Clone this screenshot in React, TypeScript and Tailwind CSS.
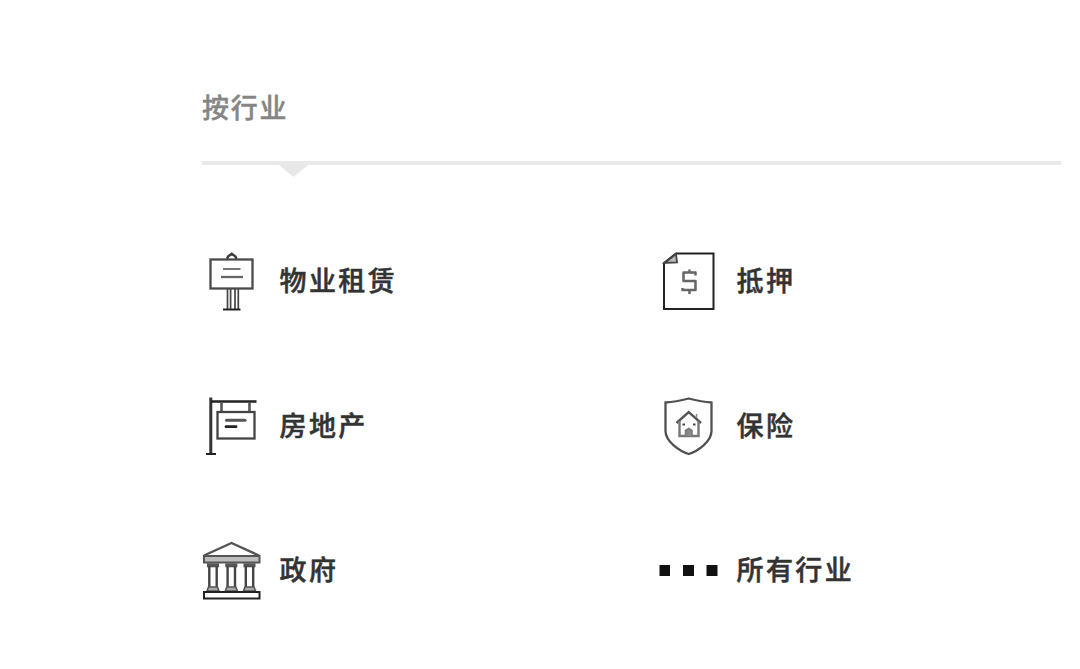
import type { ReactNode } from 'react';

interface Industry {
  label: string;
  icon: ReactNode;
}

const svgProps = {
  width: 60,
  height: 60,
  viewBox: '0 0 60 60',
  fill: 'none',
  stroke: '#3a3a3a',
  strokeWidth: 2,
};

const RentIcon = () => (
  <svg {...svgProps}>
    <path d="M25 7 26 4.5 29.7 1.8 33.5 4.5 34.5 7" strokeWidth="2.4" />
    <rect x="8.5" y="7.5" width="42" height="29" stroke="#4a4a4a" strokeWidth="2.3" />
    <path d="M21 17H38.5" stroke="#777" />
    <path d="M19 25H41" stroke="#666" strokeWidth="2.3" />
    <path d="M25.5 37V57M28.6 37V57M33 37V57M36.3 37V57" stroke="#444" strokeWidth="1.7" />
    <path d="M21 57.5H38.5" stroke="#222" />
  </svg>
);

const MortgageIcon = () => (
  <svg {...svgProps}>
    <path d="M17 1.5H54.5V57H5V11Z" stroke="#222" />
    <path d="M17 2 18 10.5 5.5 11Z" fill="#bbb" stroke="#444" strokeWidth="1.8" />
    <path
      d="M36.5 23.5V20.5H24.5V29H36.5V38H23.5V36M30.5 17.5V21M30.5 38V42"
      stroke="#666"
      strokeWidth="2.5"
      strokeLinejoin="round"
    />
  </svg>
);

const RealEstateIcon = () => (
  <svg {...svgProps}>
    <path d="M8.8 0.5V57" stroke="#333" strokeWidth="3" />
    <path d="M4 57H14" stroke="#222" />
    <path d="M9 4.5H54.5" stroke="#222" strokeWidth="2.6" />
    <path d="M19.5 5V14M47.5 5V14" stroke="#555" strokeWidth="2.6" />
    <rect x="15.5" y="15" width="37" height="26.5" stroke="#444" strokeWidth="2.3" />
    <path d="M24.5 23.2H43" stroke="#555" strokeWidth="3" strokeLinecap="round" />
    <path d="M24 29.7H34" stroke="#222" strokeWidth="2.8" strokeLinecap="round" />
  </svg>
);

const InsuranceIcon = () => (
  <svg {...svgProps}>
    <path
      d="M6.5 5.5C15 5 22 3.5 29.7 1.5C37.5 3.5 44.5 5 52.5 5.5V34C52.5 44.5 39 54 29.7 57C20.5 54 6.5 44.5 6.5 34Z"
      stroke="#505050"
      strokeWidth="2.3"
    />
    <path d="M17.5 26 29.7 15 42 26" stroke="#555" strokeWidth="2.4" />
    <path d="M20.5 24V39H39.5V24" stroke="#777" strokeWidth="2.4" />
    <path d="M37.5 17V21" stroke="#888" strokeWidth="1.5" />
    <path d="M26.5 39V33.5L29.8 31.5 33 33.5V39" fill="#888" stroke="#777" strokeWidth="1.5" />
    <path d="M23.5 27.5H26M34 27.5H36.5" stroke="#444" strokeWidth="2.2" />
  </svg>
);

const GovernmentIcon = () => (
  <svg {...svgProps}>
    <path d="M2 14.5 29.5 2 57 14.5" stroke="#555" strokeWidth="2.4" />
    <rect x="2" y="15" width="55.5" height="6.5" fill="#bdbdbd" stroke="#555" />
    {[11, 29.3, 47.5].map(x => (
      <g key={x} stroke="#444">
        <path d={`M${x - 6} 24.3H${x + 6}`} stroke="#555" strokeWidth="4" />
        <path d={`M${x - 3.7} 25V46M${x + 3.7} 25V46`} strokeWidth="2.4" />
        <path
          d={`M${x - 4.5} 46H${x + 4.5}L${x + 6} 50H${x - 6}Z`}
          fill="#aaa"
          stroke="#555"
          strokeWidth="1.6"
        />
      </g>
    ))}
    <rect x="2" y="51" width="55.5" height="6.5" stroke="#222" />
  </svg>
);

const MoreIcon = () => (
  <svg {...svgProps} fill="#111" stroke="none">
    <rect x="0.5" y="24" width="10.5" height="11" />
    <rect x="24" y="24" width="11" height="11" />
    <rect x="47.5" y="24" width="11" height="11" />
  </svg>
);

const industries: Industry[] = [
  { label: '物业租赁', icon: <RentIcon /> },
  { label: '抵押', icon: <MortgageIcon /> },
  { label: '房地产', icon: <RealEstateIcon /> },
  { label: '保险', icon: <InsuranceIcon /> },
  { label: '政府', icon: <GovernmentIcon /> },
  { label: '所有行业', icon: <MoreIcon /> },
];

export default function App() {
  return (
    <div className="min-h-[669px] bg-white pl-[202px] pt-[87px] font-['Noto_Sans_CJK_SC',sans-serif]">
      <h2 className="h-10 text-[27px] leading-10 font-medium tracking-[1.8px] text-[#858585] [-webkit-text-stroke:0.4px_#858585]">
        按行业
      </h2>

      {/* Divider with the caret under the heading */}
      <div className="relative mt-[34px] h-1 w-[859px] bg-[#e9e9e9]">
        <svg className="absolute top-1 left-[77px]" width="29" height="12" viewBox="0 0 29 12">
          <path d="M0 0H29L14.5 12Z" fill="#e7e7e7" />
        </svg>
      </div>

      <ul className="mt-[87px] grid grid-cols-[457px_auto] gap-y-[84.5px]">
        {industries.map(({ label, icon }) => (
          <li key={label} className="flex h-[60px] items-center gap-[17.5px]">
            {icon}
            <span className="pb-1 text-[27px] leading-10 font-medium tracking-[2.4px] text-[#333] [-webkit-text-stroke:0.5px_#333]">
              {label}
            </span>
          </li>
        ))}
      </ul>
    </div>
  );
}
